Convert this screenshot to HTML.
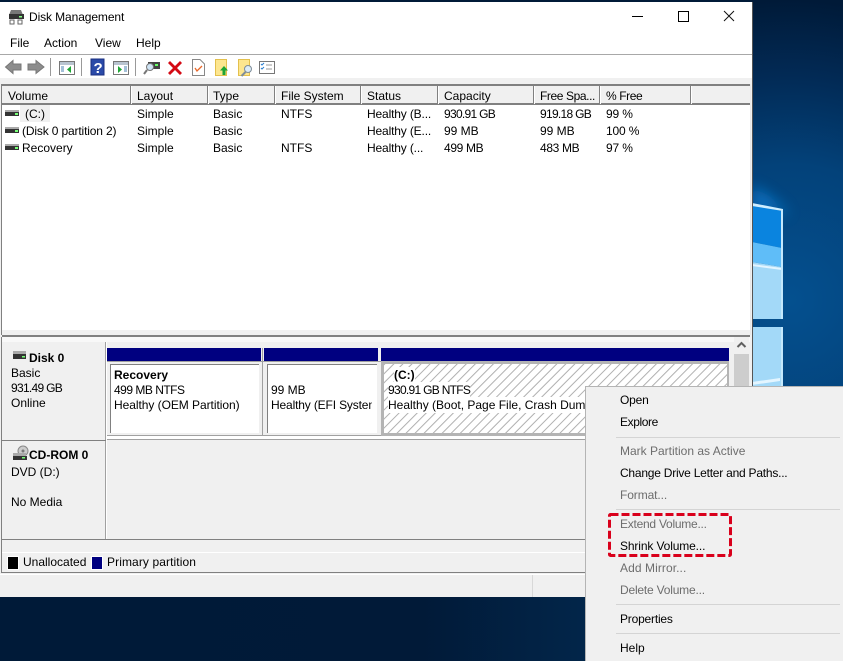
<!DOCTYPE html>
<html><head><meta charset="utf-8"><style>
html,body{margin:0;padding:0}
body{width:843px;height:661px;position:relative;overflow:hidden;background:#02264a;font:12px/16px "Liberation Sans",sans-serif;color:#000}
.a{position:absolute}
.t{position:absolute;white-space:nowrap;line-height:16px;height:16px}
.g{color:#6d6d6d}
.b{font-weight:bold}
.n{letter-spacing:-.7px}
.s{letter-spacing:-.15px}
.hs{position:absolute;top:86px;width:1px;height:18px;background:#808080;border-right:1px solid #fff}
</style></head><body>
<svg class="a" style="left:0;top:0" width="843" height="661">
<defs>
<radialGradient id="bg" gradientUnits="userSpaceOnUse" cx="790" cy="300" r="300"><stop offset="0" stop-color="#04508f"/><stop offset=".45" stop-color="#03427a"/><stop offset=".75" stop-color="#022a55"/><stop offset="1" stop-color="#001a38"/></radialGradient>
<linearGradient id="bot" x1="0" x2="1" y1="0" y2="0"><stop offset="0" stop-color="#001a38"/><stop offset=".5" stop-color="#011a38"/><stop offset=".7" stop-color="#02264a"/><stop offset="1" stop-color="#021f40"/></linearGradient>
<filter id="bl" x="-50%" y="-50%" width="200%" height="200%"><feGaussianBlur stdDeviation="7"/></filter>
</defs>
<rect width="843" height="661" fill="url(#bg)"/>
<rect y="597" width="843" height="64" fill="url(#bot)"/>
<polygon points="752,185 752,210 790,214 772,198" fill="#0a7fd6" opacity=".75" filter="url(#bl)"/>
<polygon points="752,204 782,211 782,248 752,242" fill="#0a84df"/>
<polygon points="752,242 782,248 782,267 752,262" fill="#5fbdf8"/>
<polygon points="752,262 782,267 782,319 752,319" fill="#a3d9f8"/>
<polygon points="752,327 782,327 782,386 752,386" fill="#a3d9f8"/>
<polygon points="752,203 783,209 783,211 752,206" fill="#cfeeff"/>
<polygon points="752,264 782,268 782,270 752,266" fill="#e3f5ff"/>
<polygon points="752,382 780,378 780,381 752,385" fill="#e3f5ff"/>
<rect x="781" y="209" width="2" height="110" fill="#c4e8fc"/>
<rect x="781" y="327" width="2" height="59" fill="#c4e8fc"/>
</svg>

<!-- window -->
<div class="a" style="left:0;top:2px;width:752px;height:595px;background:#f0f0f0;border-right:1px solid #555"></div>
<div class="a" style="left:0;top:2px;width:752px;height:52px;background:#fff"></div>
<div class="a" style="left:0;top:54px;width:752px;height:1px;background:#a8a8a8"></div>
<div class="a" style="left:0;top:55px;width:752px;height:23px;background:#fff"></div>

<svg class="a" style="left:8px;top:9px" width="17" height="16"><path d="M3 1h10l2 5H1z" fill="#777"/><rect x="1" y="5" width="15" height="5" fill="#333"/><rect x="11" y="7" width="3" height="1.500" fill="#8f8"/><rect x="2" y="11" width="4" height="4" fill="none" stroke="#666"/><rect x="10" y="11" width="4" height="4" fill="none" stroke="#666"/></svg>
<span class="t" style="left:29px;top:9px;letter-spacing:-.1px">Disk Management</span>
<div class="a" style="left:632px;top:16px;width:11px;height:1px;background:#000"></div>
<div class="a" style="left:678px;top:11px;width:9px;height:9px;border:1px solid #000"></div>
<svg class="a" style="left:723px;top:10px" width="12" height="12"><path d="M1 1L11 11M11 1L1 11" stroke="#111" stroke-width="1"/></svg>

<span class="t" style="left:10px;top:35px">File</span>
<span class="t" style="left:44px;top:35px">Action</span>
<span class="t" style="left:95px;top:35px">View</span>
<span class="t" style="left:136px;top:35px">Help</span>

<!-- toolbar -->
<svg class="a" style="left:0;top:55px" width="285" height="24">
<path d="M5.500 12L13 5.500V9H21V15H13V18.500Z" fill="#8d8d8d" stroke="#777"/>
<path d="M44 12L36 5.500V9H28V15H36V18.500Z" fill="#8d8d8d" stroke="#777"/>
<path d="M50.500 3V21M81.500 3V21M135.500 3V21" stroke="#999"/>
<rect x="59.500" y="6.500" width="15" height="13" fill="#fff" stroke="#777"/><rect x="60" y="7" width="14" height="3" fill="#b9c4d0"/><path d="M61 12h3M61 14h3M61 16h3" stroke="#4a80b0"/><path d="M71 11V18L67 14.500Z" fill="#1da534"/>
<rect x="91" y="4" width="13" height="16" fill="#2a4aa8"/><rect x="91" y="4" width="13" height="16" fill="none" stroke="#1a2f80"/><text x="93.500" y="18" font-family="Liberation Sans" font-size="15" font-weight="bold" fill="#fff">?</text>
<rect x="113.500" y="6.500" width="15" height="13" fill="#fff" stroke="#777"/><rect x="114" y="7" width="14" height="3" fill="#b9c4d0"/><path d="M124 12h3M124 14h3M124 16h3" stroke="#4a80b0"/><path d="M118 11V18L122 14.500Z" fill="#1da534"/>
<rect x="148" y="7" width="12" height="7" fill="#444"/><rect x="155" y="9" width="3" height="2" fill="#6f6"/><circle cx="150" cy="12" r="3.500" fill="#cfe4f5" stroke="#777"/><path d="M147 15L144 19" stroke="#777" stroke-width="2"/>
<path d="M170 6L175 11L180 6L182 8L177 13L182 18L180 20L175 15L170 20L168 18L173 13L168 8Z" fill="#d40a14"/>
<path d="M192.500 4.500H200L204.500 9V20.500H192.500Z" fill="#fff" stroke="#888"/><path d="M195 13L197 16L202 11" fill="none" stroke="#e8682a" stroke-width="1.300"/>
<rect x="215.500" y="4.500" width="11" height="16" fill="#fde68f" stroke="#e3c04d"/><path d="M224 11L228 15.500H225.500V20H222.500V15.500H220Z" fill="#1da534"/>
<rect x="238.500" y="4.500" width="11" height="16" fill="#fde68f" stroke="#e3c04d"/><circle cx="248" cy="14" r="3.500" fill="#dcecf8" stroke="#7f8d99"/><path d="M245.500 17L241.500 21" stroke="#7f8d99" stroke-width="2"/>
<rect x="259.500" y="6.500" width="15" height="12" fill="#fff" stroke="#777"/><path d="M261 9l1 1 2-2M261 13l1 1 2-2" fill="none" stroke="#2a7fd0"/><path d="M266 10h6M266 14h6" stroke="#999"/>
</svg>

<!-- list -->
<div class="a" style="left:2px;top:84px;width:748px;height:246px;background:#fff"></div>
<div class="a" style="left:2px;top:84px;width:748px;height:2px;background:#808080"></div>
<div class="a" style="left:2px;top:86px;width:748px;height:17px;background:#f0f0f0"></div>
<div class="a" style="left:2px;top:103px;width:748px;height:2px;background:#808080"></div>
<div class="a" style="left:1px;top:84px;width:1px;height:251px;background:#808080"></div>
<div class="a" style="left:750px;top:84px;width:1px;height:251px;background:#e8e8e8"></div>
<div class="hs" style="left:130px"></div><div class="hs" style="left:207px"></div><div class="hs" style="left:274px"></div><div class="hs" style="left:360px"></div><div class="hs" style="left:437px"></div><div class="hs" style="left:533px"></div><div class="hs" style="left:599px"></div><div class="hs" style="left:690px"></div>
<span class="t" style="left:8px;top:88px">Volume</span><span class="t" style="left:137px;top:88px">Layout</span><span class="t" style="left:213px;top:88px">Type</span><span class="t" style="left:281px;top:88px">File System</span><span class="t" style="left:367px;top:88px">Status</span><span class="t" style="left:444px;top:88px">Capacity</span><span class="t" style="left:540px;top:88px;letter-spacing:-.4px">Free Spa...</span><span class="t" style="left:606px;top:88px;letter-spacing:-.4px">% Free</span>

<div class="a" style="left:20px;top:105px;width:30px;height:17px;background:#f0f0f0"></div>
<svg class="a" style="left:5px;top:108px" width="15" height="46"><rect x="0" y="2" width="14" height="2" fill="#aaa"/><rect x="0" y="4" width="14" height="4" fill="#333"/><rect x="10" y="5" width="3" height="2" fill="#7f7"/><rect x="0" y="19" width="14" height="2" fill="#aaa"/><rect x="0" y="21" width="14" height="4" fill="#333"/><rect x="10" y="22" width="3" height="2" fill="#7f7"/><rect x="0" y="36" width="14" height="2" fill="#aaa"/><rect x="0" y="38" width="14" height="4" fill="#333"/><rect x="10" y="39" width="3" height="2" fill="#7f7"/></svg>

<span class="t" style="left:25px;top:106px">(C:)</span><span class="t" style="left:137px;top:106px">Simple</span><span class="t" style="left:213px;top:106px">Basic</span><span class="t" style="left:281px;top:106px">NTFS</span><span class="t s" style="left:367px;top:106px">Healthy (B...</span><span class="t n" style="left:444px;top:106px">930.91 GB</span><span class="t n" style="left:540px;top:106px">919.18 GB</span><span class="t s" style="left:606px;top:106px">99 %</span>
<span class="t s" style="left:22px;top:123px">(Disk 0 partition 2)</span><span class="t" style="left:137px;top:123px">Simple</span><span class="t" style="left:213px;top:123px">Basic</span><span class="t s" style="left:367px;top:123px">Healthy (E...</span><span class="t" style="left:444px;top:123px">99 MB</span><span class="t" style="left:540px;top:123px">99 MB</span><span class="t s" style="left:606px;top:123px">100 %</span>
<span class="t" style="left:22px;top:140px">Recovery</span><span class="t" style="left:137px;top:140px">Simple</span><span class="t" style="left:213px;top:140px">Basic</span><span class="t" style="left:281px;top:140px">NTFS</span><span class="t s" style="left:367px;top:140px">Healthy (...</span><span class="t s" style="left:444px;top:140px;letter-spacing:-.35px">499 MB</span><span class="t" style="left:540px;top:140px;letter-spacing:-.35px">483 MB</span><span class="t s" style="left:606px;top:140px">97 %</span>

<!-- splitter -->
<div class="a" style="left:2px;top:330px;width:748px;height:5px;background:#f0f0f0"></div>
<div class="a" style="left:2px;top:335px;width:748px;height:2px;background:#808080"></div>
<div class="a" style="left:1px;top:337px;width:1px;height:236px;background:#808080"></div>
<div class="a" style="left:2px;top:337px;width:748px;height:5px;background:#f8f8f8"></div>
<!-- disk pane -->
<div class="a" style="left:2px;top:342px;width:730px;height:197px;background:#f0f0f0"></div>
<div class="a" style="left:105px;top:342px;width:1px;height:197px;background:#a0a0a0;border-right:1px solid #fff"></div>
<div class="a" style="left:2px;top:440px;width:104px;height:1px;background:#808080"></div>
<div class="a" style="left:107px;top:435px;width:625px;height:1px;background:#a0a0a0"></div>
<div class="a" style="left:107px;top:436px;width:625px;height:3px;background:#fff"></div>
<div class="a" style="left:107px;top:439px;width:625px;height:1px;background:#a0a0a0"></div>
<div class="a" style="left:2px;top:539px;width:748px;height:1px;background:#808080"></div>
<div class="a" style="left:2px;top:552px;width:748px;height:1px;background:#fff"></div>
<div class="a" style="left:1px;top:572px;width:750px;height:1px;background:#808080"></div>
<div class="a" style="left:0;top:574px;width:752px;height:1px;background:#fff"></div>
<div class="a" style="left:532px;top:575px;width:1px;height:22px;background:#d8d8d8"></div>

<svg class="a" style="left:13px;top:351px" width="16" height="12"><rect y="0" width="13" height="3" fill="#aaa"/><rect y="3" width="13" height="5" fill="#333"/><rect x="9" y="5" width="3" height="1.500" fill="#7f7"/></svg>
<span class="t b" style="left:29px;top:350px">Disk 0</span>
<span class="t" style="left:11px;top:365px">Basic</span>
<span class="t n" style="left:11px;top:380px">931.49 GB</span>
<span class="t" style="left:11px;top:395px">Online</span>
<svg class="a" style="left:13px;top:445px" width="16" height="17"><circle cx="10" cy="6" r="5" fill="#ccc" stroke="#888"/><circle cx="10" cy="6" r="1.500" fill="#777"/><rect y="8" width="13" height="3" fill="#aaa"/><rect y="11" width="14" height="4" fill="#333"/><rect x="9" y="12" width="3" height="1.500" fill="#7f7"/></svg>
<span class="t b" style="left:29px;top:447px">CD-ROM 0</span>
<span class="t" style="left:11px;top:464px">DVD (D:)</span>
<span class="t" style="left:11px;top:494px">No Media</span>

<!-- partitions -->
<div class="a" style="left:107px;top:348px;width:154px;height:13px;background:#000080"></div>
<div class="a" style="left:264px;top:348px;width:114px;height:13px;background:#000080"></div>
<div class="a" style="left:381px;top:348px;width:348px;height:13px;background:#000080"></div>
<div class="a" style="left:262px;top:348px;width:1px;height:88px;background:#a0a0a0"></div>
<div class="a" style="left:107px;top:361px;width:622px;height:1px;background:#a0a0a0"></div>
<div class="a" style="left:110px;top:364px;width:148px;height:68px;background:#fff;border-left:1px solid #808080;border-top:1px solid #808080"></div>
<div class="a" style="left:267px;top:364px;width:109px;height:68px;background:#fff;border-left:1px solid #808080;border-top:1px solid #808080"></div>
<div class="a" style="left:381px;top:361px;width:348px;height:75px;background:#b4b4b4"></div>
<svg class="a" style="left:384px;top:364px" width="343" height="69"><defs><pattern id="h" width="6.400" height="6.400" patternUnits="userSpaceOnUse" patternTransform="rotate(45)"><rect width="6.400" height="6.400" fill="#fff"/><rect width="1" height="6.400" fill="#b0b0b0"/></pattern></defs><rect width="343" height="69" fill="url(#h)"/></svg>
<span class="t b" style="left:114px;top:367px">Recovery</span>
<span class="t" style="left:114px;top:382px;letter-spacing:-.5px">499 MB NTFS</span>
<span class="t" style="left:114px;top:397px;letter-spacing:-.05px">Healthy (OEM Partition)</span>
<span class="t" style="left:271px;top:382px">99 MB</span>
<span class="t" style="left:271px;top:397px;width:101px;overflow:hidden;letter-spacing:-.15px">Healthy (EFI System</span>
<span class="t b" style="left:394px;top:367px;background:#fff">(C:)</span>
<span class="t" style="left:388px;top:382px;background:#fff;letter-spacing:-.7px">930.91 GB NTFS</span>
<span class="t" style="left:388px;top:397px;background:#fff">Healthy (Boot, Page File, Crash Dump</span>

<!-- scrollbar -->
<div class="a" style="left:734px;top:337px;width:15px;height:202px;background:#cdcdcd"></div>
<div class="a" style="left:734px;top:337px;width:15px;height:17px;background:#f0f0f0"></div>
<svg class="a" style="left:736px;top:340px" width="11" height="9"><path d="M1.500 7L5.500 3L9.500 7" fill="none" stroke="#606060" stroke-width="2"/></svg>

<!-- legend -->
<div class="a" style="left:7px;top:556px;width:10px;height:12px;background:#000;border:1px solid #fff"></div>
<span class="t" style="left:23px;top:554px">Unallocated</span>
<div class="a" style="left:91px;top:556px;width:10px;height:12px;background:#000080;border:1px solid #fff"></div>
<span class="t" style="left:107px;top:554px;letter-spacing:.1px">Primary partition</span>

<!-- context menu -->
<div class="a" style="left:585px;top:386px;width:258px;height:275px;background:#f0f0f0;border-left:1px solid #b4b4b4;border-top:1px solid #b4b4b4;box-sizing:border-box"></div>
<div class="a" style="left:616px;top:437px;width:224px;height:1px;background:#d4d4d4"></div>
<div class="a" style="left:616px;top:509px;width:224px;height:1px;background:#d4d4d4"></div>
<div class="a" style="left:616px;top:604px;width:224px;height:1px;background:#d4d4d4"></div>
<div class="a" style="left:616px;top:633px;width:224px;height:1px;background:#d4d4d4"></div>
<span class="t" style="left:620px;top:392px;letter-spacing:-.2px">Open</span>
<span class="t" style="left:620px;top:414px;letter-spacing:-.4px">Explore</span>
<span class="t g" style="left:620px;top:443px">Mark Partition as Active</span>
<span class="t" style="left:620px;top:465px;letter-spacing:-.23px">Change Drive Letter and Paths...</span>
<span class="t g" style="left:620px;top:487px;letter-spacing:-.1px">Format...</span>
<span class="t g" style="left:620px;top:516px;letter-spacing:-.25px">Extend Volume...</span>
<span class="t" style="left:620px;top:538px;letter-spacing:-.13px">Shrink Volume...</span>
<span class="t g" style="left:620px;top:560px;letter-spacing:.08px">Add Mirror...</span>
<span class="t g" style="left:620px;top:582px;letter-spacing:-.2px">Delete Volume...</span>
<span class="t" style="left:620px;top:611px;letter-spacing:-.2px">Properties</span>
<span class="t" style="left:620px;top:640px">Help</span>
<svg class="a" style="left:605px;top:510px" width="130" height="50"><rect x="4.500" y="4.500" width="121" height="41" rx="1" fill="none" stroke="#d9001b" stroke-width="3" stroke-dasharray="8 3"/></svg>
</body></html>
